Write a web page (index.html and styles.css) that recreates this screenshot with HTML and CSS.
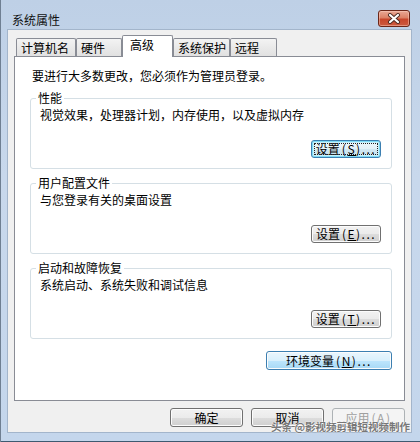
FILE: index.html
```html
<!DOCTYPE html>
<html lang="zh-CN">
<head>
<meta charset="utf-8">
<title>系统属性</title>
<link rel="stylesheet" href="styles.css">
</head>
<body>
<div class="window">
  <div class="titlebar">
    <span class="title">系统属性</span>
    <button class="close" aria-label="关闭">
      <svg width="14" height="11" viewBox="0 0 14 11">
        <path d="M3 2 L11 9 M11 2 L3 9" stroke="#4a2a22" stroke-width="4" stroke-linecap="round" fill="none"/>
        <path d="M3 2 L11 9 M11 2 L3 9" stroke="#ffffff" stroke-width="2.2" stroke-linecap="round" fill="none"/>
      </svg>
    </button>
  </div>
  <div class="client">
    <div class="tabs">
      <div class="tab tab-computer">计算机名</div>
      <div class="tab tab-hardware">硬件</div>
      <div class="tab tab-advanced active">高级</div>
      <div class="tab tab-protect">系统保护</div>
      <div class="tab tab-remote">远程</div>
    </div>
    <div class="panel">
      <p class="intro">要进行大多数更改，您必须作为管理员登录。</p>
      <fieldset class="group">
        <legend>性能</legend>
        <p class="desc">视觉效果，处理器计划，内存使用，以及虚拟内存</p>
        <div class="actions"><button class="btn btn-settings btn-focus">设置<span class="key">(<u>S</u>)...</span></button></div>
      </fieldset>
      <fieldset class="group">
        <legend>用户配置文件</legend>
        <p class="desc">与您登录有关的桌面设置</p>
        <div class="actions"><button class="btn btn-settings">设置<span class="key">(<u>E</u>)...</span></button></div>
      </fieldset>
      <fieldset class="group">
        <legend>启动和故障恢复</legend>
        <p class="desc">系统启动、系统失败和调试信息</p>
        <div class="actions"><button class="btn btn-settings">设置<span class="key">(<u>T</u>)...</span></button></div>
      </fieldset>
      <div class="env-row"><button class="btn btn-env">环境变量<span class="key">(<u>N</u>)...</span></button></div>
    </div>
    <div class="footer">
      <button class="btn btn-dialog">确定</button>
      <button class="btn btn-dialog">取消</button>
      <button class="btn btn-dialog" disabled>应用<span class="key">(<u>A</u>)</span></button>
    </div>
  </div>
  <div class="watermark">头条 @影视频剪辑短视频制作</div>
</div>
</body>
</html>
```
FILE: styles.css
```css
* { box-sizing: border-box; }
html, body { margin: 0; padding: 0; }
body {
  width: 420px;
  height: 442px;
  overflow: hidden;
  font: 12px/14px "Noto Sans CJK SC", "Noto Sans", sans-serif;
  color: #000;
}
.window {
  position: relative;
  width: 420px;
  height: 442px;
  display: flex;
  flex-direction: column;
  background: linear-gradient(#bed0e6, #c8d8ec 40%, #c4d6ec);
  box-shadow: inset 1px 0 #6f7f92, inset 0 -1px #3e5a70;
}
.titlebar {
  height: 29px;
  display: flex;
  padding: 10px 10px 0 12px;
}
.title { align-self: center; line-height: 14px; color: #111; }
.close {
  margin-left: auto;
  width: 32px;
  height: 17px;
  padding: 0;
  border: 1px solid #6b2618;
  border-radius: 3px;
  background: linear-gradient(#e9a895, #dc8166 45%, #c8462b 55%, #cc5a3f);
  box-shadow: inset 0 0 0 1px rgba(255, 215, 200, 0.45);
  display: flex;
  align-items: center;
  justify-content: center;
}
.close svg { display: block; }
.client {
  flex: 1;
  margin: 0 8px 9px 7px;
  border: 1px solid #a3b5cb;
  background: #f0f0f0;
  padding: 5px 6px 5px 6px;
  display: flex;
  flex-direction: column;
}
.tabs {
  display: flex;
  align-items: flex-end;
  height: 22px;
  margin-bottom: -1px;
  padding-left: 2px;
}
.tab {
  height: 19px;
  border: 1px solid #898c95;
  border-bottom: 0;
  border-radius: 2px 2px 0 0;
  background: linear-gradient(#f3f3f3, #e9e9e9 50%, #e0e0e0);
  padding: 2px 0 0 4px;
  line-height: 14px;
  white-space: nowrap;
}
.tab.active {
  height: 22px;
  background: #fff;
  position: relative;
  z-index: 1;
  padding-left: 7px;
}
.tab-computer { width: 60px; }
.tab-hardware { width: 46px; }
.tab-advanced { width: 51px; }
.tab-protect { width: 57px; }
.tab-remote { width: 47px; }
.panel {
  height: 345px;
  border: 1px solid #898c95;
  background: #fff;
  padding: 12px 12px 0 15px;
  display: flex;
  flex-direction: column;
}
.intro { margin: 0 0 0 2px; }
.group {
  margin: 8px 0 0;
  padding: 3px 10px 10px 5px;
  border: 1px solid #d5dfe5;
  border-radius: 3px;
  min-width: 0;
}
.group + .group { margin-top: 7px; }
.group legend { padding: 0 2px; margin: 0; line-height: 14px; }
.desc { margin: 0 0 0 4px; }
.actions {
  display: flex;
  justify-content: flex-end;
  margin-top: 18px;
}
.btn {
  font: inherit;
  line-height: 14px;
  color: #000;
  height: 18px;
  padding: 0;
  border: 1px solid #707070;
  border-radius: 3px;
  background: linear-gradient(#f2f2f2, #ebebeb 50%, #dddddd 50%, #cfcfcf);
  box-shadow: inset 0 0 0 1px #fcfcfc;
  white-space: nowrap;
}
.key { letter-spacing: 1.5px; margin-left: 2px; }
.btn-settings { width: 70px; }
.btn-focus {
  border-color: #3c7fb1;
  box-shadow: inset 0 0 0 1px #7fdcf7, inset 0 0 0 2px #c9f0fb;
  background: linear-gradient(#eef7fb, #e3f1f8 50%, #d3e9f3 50%, #c6e0ec);
  outline: 1px dotted #222;
  outline-offset: -4px;
}
.env-row {
  display: flex;
  justify-content: flex-end;
  margin-top: 12px;
}
.btn-env {
  width: 126px;
  height: 19px;
  border-color: #3c7fb1;
  background: linear-gradient(#eaf6fd, #d9f0fc 50%, #bee6fd 50%, #a7d9f5);
}
.footer {
  display: flex;
  justify-content: flex-end;
  gap: 8px;
  margin-top: 7px;
}
.btn-dialog { width: 73px; height: 19px; }
.btn:disabled {
  color: #a0a0a0;
  border-color: #adb2b5;
  background: #f4f4f4;
  box-shadow: none;
}
.watermark {
  position: absolute;
  right: 10px;
  bottom: 9px;
  font-size: 10.5px;
  line-height: 12px;
  font-weight: bold;
  color: #777;
  text-shadow: 0 0 2px #fff, 0 0 1px #fff;
  white-space: nowrap;
}
```
